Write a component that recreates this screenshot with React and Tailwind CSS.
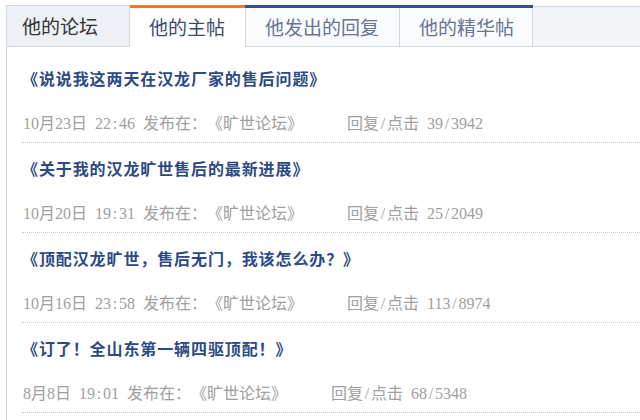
import React from 'react';

const posts = [
    { title: '《说说我这两天在汉龙厂家的售后问题》', date: '10月23日', time: '22:46', stat: '39/3942' },
    { title: '《关于我的汉龙旷世售后的最新进展》', date: '10月20日', time: '19:31', stat: '25/2049' },
    { title: '《顶配汉龙旷世，售后无门，我该怎么办？》', date: '10月16日', time: '23:58', stat: '113/8974' },
    { title: '《订了！全山东第一辆四驱顶配！》', date: '8月8日', time: '19:01', stat: '68/5348' },
];

const serif = { fontFamily: '"Liberation Serif", "Noto Sans CJK SC", serif' };

// half-width cells like the old song-style font: punctuation and spaces get 8px
const Half = ({ text }) =>
    text.split('').map((c, i) =>
        c === ':' || c === '/' || c === ' ' ? (
            <span key={i} className="inline-block w-[8px] text-center">{c === ' ' ? '\u00a0' : c}</span>
        ) : (
            <React.Fragment key={i}>{c}</React.Fragment>
        )
    );

const App = () => {
    return (
        <div className="w-[640px] h-[420px] overflow-hidden bg-white pt-[5px] pl-[6px] [text-spacing-trim:space-all]" style={{ fontFamily: '"Noto Sans CJK SC", sans-serif' }}>
            {/* tabs */}
            <div className="flex h-[42px] w-[700px]">
                <div className="w-[124px] flex items-center pl-[15px] bg-[#edf0f5] border border-[#d3d8e0] text-[19px] text-[#333]">
                    他的论坛
                </div>
                <div className="w-[115px] flex items-center pl-[19px] bg-white border-t-[3px] border-t-[#ee7a2a] text-[19px] text-[#3d4b6a]">
                    他的主帖
                </div>
                <div className="flex border-t-[3px] border-t-[#34508f]">
                    <div className="w-[155px] flex items-center pl-[19px] bg-[#fafbfd] border-l border-r border-b border-[#d3d8e0] text-[19px] text-[#6a7591]">
                        他发出的回复
                    </div>
                    <div className="w-[133px] flex items-center pl-[19px] bg-[#fafbfd] border-r border-b border-[#d3d8e0] text-[19px] text-[#6a7591]">
                        他的精华帖
                    </div>
                </div>
                <div className="flex-1 mt-px bg-[#f3f5f9] border-t border-b border-[#d3d8e0]"></div>
            </div>

            {/* list */}
            <div className="border-l border-[#d3d8e0] h-[380px] pt-[6px] pl-[15px]">
                {posts.map((p, i) => (
                    <div key={i} className="h-[90px] pt-[15px] border-b border-dotted border-[#c8c8c8]">
                        <div className="h-[24px] flex items-center text-[16px] font-bold tracking-[0.9px] text-[#2d4a86]" style={serif}>
                            {p.title}
                        </div>
                        <div className="mt-[20px] h-[24px] flex items-center text-[16px] text-[#a0a0a0] whitespace-nowrap" style={serif}>
                            <span className="pl-px">
                                <Half text={`${p.date} ${p.time} `} />发布在：《旷世论坛》
                            </span>
                            <span className="ml-[44px]">
                                回复<Half text="/" />点击<Half text={` ${p.stat}`} />
                            </span>
                        </div>
                    </div>
                ))}
            </div>
        </div>
    );
};

export default App;
